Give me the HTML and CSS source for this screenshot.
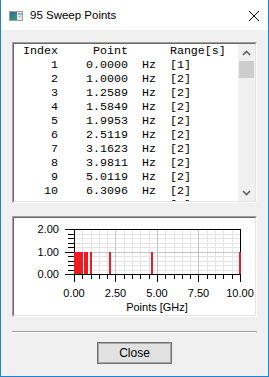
FILE: index.html
```html
<!DOCTYPE html>
<html lang="en">

<head>
    <meta charset="UTF-8">
    <title>95 Sweep Points</title>
    <link rel="stylesheet" href="styles.css">
</head>

<body>
    <div class="window">
        <div class="titlebar">
            <svg class="app-icon" width="14" height="10" viewBox="0 0 14 10">
                <defs>
                    <linearGradient id="iconFill" x1="0" y1="0" x2="1" y2="1">
                        <stop offset="0" stop-color="#2b6d9c" />
                        <stop offset="1" stop-color="#3f9b6b" />
                    </linearGradient>
                </defs>
                <rect x="0.5" y="0.5" width="13" height="9" fill="#e6e6e6" stroke="#9c9c9c" />
                <rect x="1" y="1" width="7" height="8" fill="url(#iconFill)" />
                <rect x="9" y="2" width="4" height="2" fill="#8fb1c6" />
                <rect x="9" y="5" width="3" height="1" fill="#b5c8d4" />
            </svg>
            <span class="title">95 Sweep Points</span>
            <svg class="close-x" width="10" height="10" viewBox="0 0 10 10">
                <path d="M0 0L10 10M10 0L0 10" stroke="#000" stroke-width="1" fill="none" />
            </svg>
        </div>

        <div class="content">
            <div class="sunken listbox">
                <div class="sunken-inner list-inner">
<pre class="rows"> Index     Point      Range[s]
     1    0.0000  Hz  [1]
     2    1.0000  Hz  [2]
     3    1.2589  Hz  [2]
     4    1.5849  Hz  [2]
     5    1.9953  Hz  [2]
     6    2.5119  Hz  [2]
     7    3.1623  Hz  [2]
     8    3.9811  Hz  [2]
     9    5.0119  Hz  [2]
    10    6.3096  Hz  [2]
    11    7.9433  Hz  [2]</pre>
                    <div class="scrollbar">
                        <div class="arrow">
                            <svg width="9" height="6" viewBox="0 0 9 6">
                                <polyline points="1,5 4.5,1.5 8,5" fill="none" stroke="#606060" stroke-width="1.6" />
                            </svg>
                        </div>
                        <div class="thumb"></div>
                        <div class="track"></div>
                        <div class="arrow">
                            <svg width="9" height="6" viewBox="0 0 9 6">
                                <polyline points="1,1 4.5,4.5 8,1" fill="none" stroke="#606060" stroke-width="1.6" />
                            </svg>
                        </div>
                    </div>
                </div>
            </div>

            <div class="sunken chartbox">
                <div class="sunken-inner">
                    <svg class="chart" width="241" height="97" viewBox="14 218 241 97">
                        <!-- grid -->
                        <path stroke="#e4e4e4" fill="none"
                            d="M75 234.5H240M75 238.5H240M75 243.5H240M75 247.5H240M75 256.5H240M75 261.5H240M75 265.5H240M75 270.5H240
                               M82.5 230V274M91.5 230V274M99.5 230V274M107.5 230V274M124.5 230V274M132.5 230V274M140.5 230V274M149.5 230V274
                               M165.5 230V274M174.5 230V274M182.5 230V274M190.5 230V274M207.5 230V274M215.5 230V274M223.5 230V274M232.5 230V274" />
                        <path stroke="#c4c4c4" fill="none"
                            d="M75 252.5H240M115.5 230V274M157.5 230V274M198.5 230V274" />
                        <!-- frame and ticks -->
                        <path stroke="#000" fill="none"
                            d="M74.5 229V275M74 229.5H241M240.5 229V275M74 274.5H241
                               M65 229.5H74M65 252.5H74M65 274.5H74
                               M68 234.5H74M68 238.5H74M68 243.5H74M68 247.5H74M68 256.5H74M68 261.5H74M68 265.5H74M68 270.5H74
                               M74.5 275V282M115.5 275V282M157.5 275V282M198.5 275V282M240.5 275V282
                               M82.5 275V279M91.5 275V279M99.5 275V279M107.5 275V279M124.5 275V279M132.5 275V279M140.5 275V279M149.5 275V279
                               M165.5 275V279M174.5 275V279M182.5 275V279M190.5 275V279M207.5 275V279M215.5 275V279M223.5 275V279M232.5 275V279" />
                        <!-- sweep points -->
                        <g fill="#ed1c24">
                            <rect x="74" y="252" width="9" height="22" />
                            <rect x="84" y="252" width="4" height="22" />
                            <rect x="90" y="252" width="2" height="22" />
                            <rect x="109" y="252" width="2" height="22" />
                            <rect x="151" y="252" width="2" height="22" />
                            <rect x="239" y="252" width="2" height="22" />
                        </g>
                        <g class="axis-label" text-anchor="end">
                            <text x="59" y="233">2.00</text>
                            <text x="59" y="256">1.00</text>
                            <text x="59" y="278">0.00</text>
                        </g>
                        <g class="axis-label" text-anchor="middle">
                            <text x="74" y="297">0.00</text>
                            <text x="115.5" y="297">2.50</text>
                            <text x="157" y="297">5.00</text>
                            <text x="198.5" y="297">7.50</text>
                            <text x="240" y="297">10.00</text>
                            <text x="157" y="311">Points [GHz]</text>
                        </g>
                    </svg>
                </div>
            </div>

            <div class="separator"></div>

            <div class="actions">
                <button type="button" class="btn">Close</button>
            </div>
        </div>
    </div>
</body>

</html>
```

FILE: styles.css
```css
body {
    margin: 0;
    background: #fff;
}

.window {
    width: 269px;
    height: 377px;
    box-sizing: border-box;
    border: 1px solid #1883d7;
    border-top: 0;
    background: #f0f0f0;
    display: flex;
    flex-direction: column;
    font-family: "Liberation Sans", Arial, sans-serif;
}

.titlebar {
    flex: none;
    height: 30px;
    background: #fff;
    display: flex;
    align-items: center;
}

.app-icon {
    margin: 2px 0 0 8px;
}

.title {
    margin-left: 7px;
    font-size: 11.5px;
    color: #000;
}

.close-x {
    margin: 2px 9px 0 auto;
}

.content {
    flex: 1;
    padding: 12px 11px 0;
    display: flex;
    flex-direction: column;
}

/* classic 3d sunken frame */
.sunken {
    flex: none;
    box-sizing: border-box;
    border: 1px solid;
    border-color: #a0a0a0 #fff #fff #a0a0a0;
}

.sunken-inner {
    box-sizing: border-box;
    height: 100%;
    border: 1px solid;
    border-color: #696969 #e3e3e3 #e3e3e3 #696969;
    background: #fff;
}

.listbox {
    height: 161px;
}

.list-inner {
    display: flex;
}

.rows {
    flex: 1;
    margin: 0;
    padding: 0 0 0 2px;
    overflow: hidden;
    white-space: pre;
    font: 11.67px/14px "Liberation Mono", "Courier New", monospace;
    color: #000;
}

.scrollbar {
    width: 17px;
    background: #f0f0f0;
    display: flex;
    flex-direction: column;
}

.arrow {
    height: 17px;
    display: flex;
    align-items: center;
    justify-content: center;
}

.thumb {
    height: 17px;
    margin: 0 1px;
    background: #cdcdcd;
}

.track {
    flex: 1;
}

.chartbox {
    margin-top: 13px;
    height: 101px;
}

.chart {
    display: block;
}

.axis-label {
    font: 11px "Liberation Sans", Arial, sans-serif;
    fill: #000;
}

.separator {
    margin-top: 14px;
    border-top: 1px solid #a0a0a0;
    border-bottom: 1px solid #fff;
}

.actions {
    display: flex;
    justify-content: center;
    margin-top: 9px;
}

.btn {
    width: 75px;
    height: 22px;
    padding: 0;
    background: #e1e1e1;
    border: 1px solid #707070;
    box-shadow: inset 0 0 0 1px #a8a8a8;
    font: 12px "Liberation Sans", Arial, sans-serif;
    color: #000;
}
```
